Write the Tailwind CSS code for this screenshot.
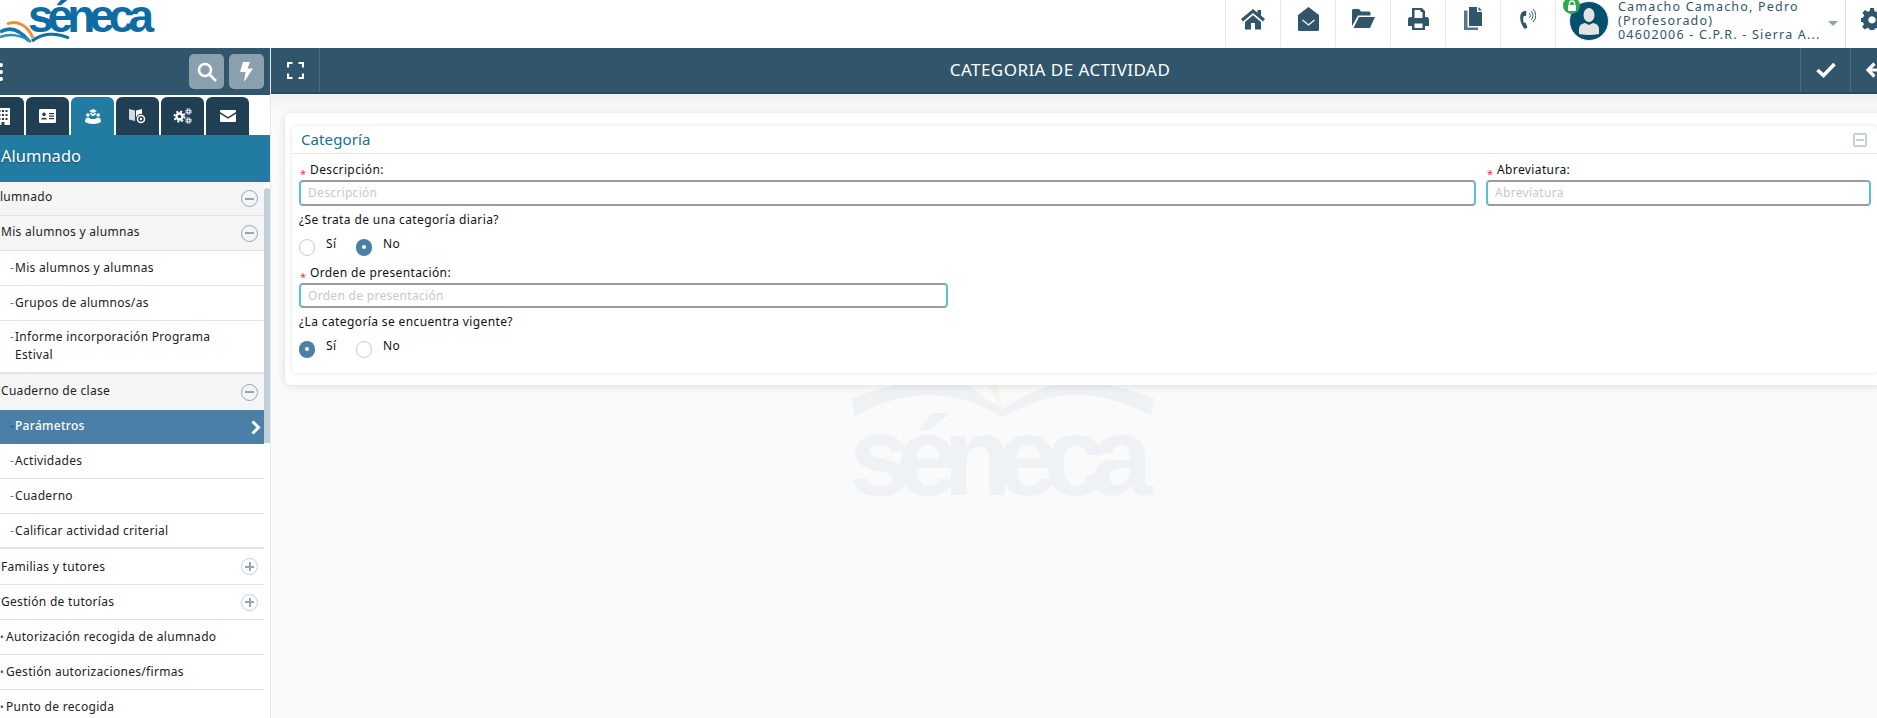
<!DOCTYPE html>
<html lang="es">
<head>
  <meta charset="UTF-8" />
  <title>Categoria de actividad</title>
  <script src="https://cdn.jsdelivr.net/npm/@tailwindcss/browser@4"></script>
</head>
<body class="w-[1877px] h-[718px] overflow-hidden flex flex-col bg-white font-['Noto_Sans',sans-serif] text-[12px] text-[#222]">

  <!-- barra superior -->
  <header class="h-[48px] shrink-0 flex items-start bg-white overflow-hidden">
    <div class="relative w-[200px] h-[47px] overflow-hidden">
      <svg class="absolute left-0 top-[18px] w-[72px] h-[26px]" viewBox="0 0 72 26" fill="none">
        <path d="M0 14 C10 8 20 12 29 23" stroke="#1c75a8" stroke-width="3.500"/>
        <path d="M0 19 C10 15 22 17 31 24" stroke="#2a8cc0" stroke-width="2.500"/>
        <path d="M7 6 C16 2 27 6 33 20" stroke="#ee8f2e" stroke-width="3"/>
        <path d="M32 23 C42 15 56 14 69 20" stroke="#0f6ea3" stroke-width="3"/>
      </svg>
      <span class="absolute left-[28px] top-[-14px] font-['Liberation_Sans',sans-serif] font-bold text-[46px] leading-[60px] tracking-[-6px] text-[#0d6ca3]">séneca</span>
    </div>
    <div class="flex-1"></div>
    <div class="flex h-[47px] text-[#31566b]">
      <div class="w-[55px] flex items-center justify-center border-l border-[#e8e8e8] pb-[10px]">
        <svg class="w-[24px] h-[22px]" viewBox="0 0 24 22" fill="currentColor"><path d="M12 1 L0 11 l2 2.4 L12 5 l10 8.4 L24 11 l-4-3.4V2h-3.5v2.7z"/><path d="M4 14 V21.500h6V15h4v6.500h6V14L12 7.200z"/></svg>
      </div>
      <div class="w-[55px] flex items-center justify-center border-l border-[#e8e8e8] pb-[10px]">
        <svg class="w-[21px] h-[24px]" viewBox="0 0 21 24" fill="currentColor"><path d="M10.500 0 L0 8 V22.500 a1.500 1.500 0 0 0 1.500 1.500 h18 a1.500 1.500 0 0 0 1.500-1.500 V8z"/><path d="M4.500 13 l6 5 6-5" fill="none" stroke="#fff" stroke-width="1.300"/></svg>
      </div>
      <div class="w-[55px] flex items-center justify-center border-l border-[#e8e8e8] pb-[10px]">
        <svg class="w-[23px] h-[19px]" viewBox="0 0 23 19" fill="currentColor"><path d="M0 17 V1.500 A1.500 1.500 0 0 1 1.500 0 H7 l2 2.500 h8 A1.500 1.500 0 0 1 18.500 4 V6.500 H6 z"/><path d="M1.500 19 L7 8 h16 l-5 11z"/></svg>
      </div>
      <div class="w-[55px] flex items-center justify-center border-l border-[#e8e8e8] pb-[10px]">
        <svg class="w-[21px] h-[22px]" viewBox="0 0 21 22" fill="currentColor" fill-rule="evenodd"><path d="M4 0 h10 l3 3 v6 h1.500 A2.500 2.500 0 0 1 21 11.500 V18 h-4 v4 H4 v-4 H0 v-6.500 A2.500 2.500 0 0 1 2.500 9 H4z M6.500 2 v8 h8 V4 h-2 V2z M6.500 15.500 v4.500 h8 v-4.500z"/></svg>
      </div>
      <div class="w-[55px] flex items-center justify-center border-l border-[#e8e8e8] pb-[10px]">
        <svg class="w-[18px] h-[23px]" viewBox="0 0 18 23" fill="currentColor"><path d="M5 0 h8 v5 h5 v14 H5z"/><path d="M14.500 0 L18 3.500 h-3.500z"/><path d="M3.500 3.500 V20.500 H14 V23 H0 V3.500z" fill="#55768a"/></svg>
      </div>
      <div class="w-[55px] flex items-center justify-center border-l border-[#e8e8e8] pb-[10px]">
        <svg class="w-[16px] h-[24px]" viewBox="0 0 16 24" fill="currentColor"><path d="M4 4 L1.500 5.500 C-1 10 0 16 4.500 22 L7.500 20.500 L5.500 15.500 L3.800 16 C3 13 3 11 3.800 9 L6 9 L6.500 4z"/><path d="M9 6 a3 3 0 0 1 0 5 M11 4 a6 6 0 0 1 0 9 M13 2 a9 9 0 0 1 0 13" fill="none" stroke="currentColor" stroke-width="1"/></svg>
      </div>
      <div class="relative w-[291px] flex border-l border-r border-[#e8e8e8] border-r-[#dddddd]">
        <div class="absolute left-[13px] top-[1px] w-[40px] h-[40px] rounded-full bg-[#05506f] border border-[#eeeeee] overflow-hidden">
          <svg class="w-[38px] h-[38px]" viewBox="0 0 38 38" fill="#e3e3e3"><ellipse cx="19" cy="13" rx="5.500" ry="7"/><path d="M9 32 V27 Q9 22 15 21 L19 23 L23 21 Q29 22 29 27 V32 Q19 34 9 32z"/></svg>
        </div>
        <div class="absolute left-[7px] top-[-3px] w-[17px] h-[17px] rounded-full bg-[#2fa84f] flex items-center justify-center">
          <svg class="w-[10px] h-[12px]" viewBox="0 0 10 12"><path d="M2.500 5 V3.500 a2.500 2.500 0 0 1 5 0 V5" fill="none" stroke="#fff" stroke-width="1.300"/><rect x="1" y="5" width="8" height="6" rx="1" fill="#fff"/></svg>
        </div>
        <div class="ml-[62px] pt-0 text-[12.500px] leading-[14px] tracking-[1.2px] text-[#31566b] whitespace-nowrap">
          <div>Camacho Camacho, Pedro</div>
          <div>(Profesorado)</div>
          <div>04602006 - C.P.R. - Sierra A...</div>
        </div>
        <div class="absolute left-[272px] top-[21px] w-0 h-0 border-x-[5px] border-x-transparent border-t-[5px] border-t-[#8ba3b3]"></div>
      </div>
      <div class="w-[31px] pl-[15px] pt-[8px] overflow-hidden">
        <svg class="w-[22px] h-[22px]" viewBox="0 0 24 24" fill="#31566b"><path fill-rule="evenodd" d="M10 0 h4 l.7 3.400 2.300 1 2.900-1.900 2.800 2.800 -1.900 2.900 1 2.300 L25 11 v4 l-3.400.7 -1 2.300 1.900 2.900 -2.800 2.800 -2.900-1.900 -2.300 1 L14 26 h-4 l-.7-3.400 -2.300-1 -2.900 1.900 -2.800-2.800 1.900-2.900 -1-2.300 L-1 15 v-4 l3.400-.7 1-2.300 L1.500 5.100 4.300 2.300 7.200 4.200 l2.300-1z M12 9 a4 4 0 1 0 .01 0z"/></svg>
      </div>
    </div>
  </header>

  <div class="flex-1 flex min-h-0">

    <!-- menu lateral -->
    <aside class="w-[270px] shrink-0 flex flex-col bg-white min-h-0">
      <div class="h-[47px] shrink-0 bg-[#31566b] flex items-center">
        <div class="w-[3px] flex flex-col gap-[3px] ml-[-1px]">
          <span class="w-[4px] h-[4px] rounded-full bg-white"></span>
          <span class="w-[4px] h-[4px] rounded-full bg-white"></span>
          <span class="w-[4px] h-[4px] rounded-full bg-white"></span>
        </div>
        <div class="ml-[187px] w-[35px] h-[35px] rounded-[5px] bg-[#8aa0ae] flex items-center justify-center">
          <svg class="w-[20px] h-[20px]" viewBox="0 0 20 20" fill="none" stroke="#fff" stroke-width="2.600"><circle cx="8" cy="8" r="6"/><path d="M12.500 12.500 L19 19"/></svg>
        </div>
        <div class="ml-[5px] w-[35px] h-[35px] rounded-[5px] bg-[#8aa0ae] flex items-center justify-center">
          <svg class="w-[13px] h-[20px]" viewBox="0 0 13 20" fill="#fff"><path d="M3 0 H10 L7.500 6.500 H13 L4 20 L5.500 10 H0z"/></svg>
        </div>
      </div>

      <nav class="h-[40px] shrink-0 pt-[2px] flex gap-[2px] ml-[-19px] items-end">
        <div class="w-[43px] h-[38px] rounded-t-[6px] bg-[#213f53] flex items-center justify-center">
          <svg class="w-[16px] h-[17px]" viewBox="0 0 16 17" fill="#fff" fill-rule="evenodd"><path d="M1 0 H15 V17 H9.500 V14 H6.500 V17 H1z M3.500 2 v2 h2 V2z M7 2 v2 h2 V2z M10.500 2 v2 h2 V2z M3.500 6 v2 h2 V6z M7 6 v2 h2 V6z M10.500 6 v2 h2 V6z M3.500 10 v2 h2 v-2z M7 10 v2 h2 v-2z M10.500 10 v2 h2 v-2z"/></svg>
        </div>
        <div class="w-[43px] h-[38px] rounded-t-[6px] bg-[#213f53] flex items-center justify-center">
          <svg class="w-[17px] h-[14px]" viewBox="0 0 17 14" fill="#fff" fill-rule="evenodd"><path d="M1 0 H16 a1 1 0 0 1 1 1 V13 a1 1 0 0 1-1 1 H1 a1 1 0 0 1-1-1 V1 a1 1 0 0 1 1-1z M5 3.500 a1.800 1.800 0 1 0 .01 0z M2 10.500 h6 c0-2.500-6-2.500-6 0z M10 4 v1.200 h5 V4z M10 6.500 v1.200 h5 V6.500z M10 9 v1.200 h5 V9z"/></svg>
        </div>
        <div class="w-[43px] h-[38px] rounded-t-[6px] bg-[#227ba1] flex items-center justify-center">
          <svg class="w-[16px] h-[15px]" viewBox="0 0 16 15" fill="#fff"><path d="M8 0 L12 2 L8 4 L4 2z"/><path d="M5 3.500 C5 8 11 8 11 3.500 L8 5z"/><circle cx="2.800" cy="6" r="1.800"/><circle cx="13.200" cy="6" r="1.800"/><path d="M0 13 C0 9 2 8.500 3.500 8.500 L6 10 H10 L12.500 8.500 C14 8.500 16 9 16 13 C12 15.500 4 15.500 0 13z"/></svg>
        </div>
        <div class="w-[43px] h-[38px] rounded-t-[6px] bg-[#213f53] flex items-center justify-center">
          <svg class="w-[17px] h-[16px]" viewBox="0 0 17 16" fill="#fff"><path d="M0 1 L6 2.500 V13 L0 11.500z" fill="#d5dde2"/><path d="M7 2.500 L13 1 V6 A5 5 0 0 0 7 10z"/><circle cx="12" cy="11" r="3.500" fill="none" stroke="#fff" stroke-width="1.500"/><circle cx="12" cy="11" r="1.200"/></svg>
        </div>
        <div class="w-[43px] h-[38px] rounded-t-[6px] bg-[#213f53] flex items-center justify-center">
          <svg class="w-[19px] h-[16px]" viewBox="0 0 19 16" fill="none" stroke="#fff"><circle cx="6.500" cy="8.500" r="5" stroke-width="2" stroke-dasharray="2 1.930"/><circle cx="6.500" cy="8.500" r="3" stroke-width="2.400"/><circle cx="15.500" cy="3.500" r="2.700" stroke-width="1.200" stroke-dasharray="1.200 .9"/><circle cx="15.500" cy="3.500" r="1.500" stroke-width="1.200"/><circle cx="15.500" cy="12.500" r="2.700" stroke-width="1.200" stroke-dasharray="1.200 .9"/><circle cx="15.500" cy="12.500" r="1.500" stroke-width="1.200"/></svg>
        </div>
        <div class="w-[43px] h-[38px] rounded-t-[6px] bg-[#213f53] flex items-center justify-center">
          <svg class="w-[16px] h-[12px]" viewBox="0 0 16 12" fill="#fff"><path d="M1 0 H15 a1 1 0 0 1 1 1 V2 L8 7 L0 2 V1 a1 1 0 0 1 1-1z"/><path d="M0 3.800 L8 8.800 L16 3.800 V11 a1 1 0 0 1-1 1 H1 a1 1 0 0 1-1-1z"/></svg>
        </div>
      </nav>

      <div class="h-[47px] shrink-0 bg-[#227ba1] flex items-center pl-[1px] pb-[5px] text-[16.500px] text-white [text-shadow:0_1px_2px_rgba(0,0,0,.35)]">Alumnado</div>

      <div class="flex flex-1 min-h-0 overflow-hidden">
        <ul class="w-[264px] shrink-0 tracking-[0.3px] leading-[18px]">
          <li class="h-[34px] flex items-center justify-between bg-[#f5f5f5] border-b border-[#e3e3e3] pr-[6px]">
            <span class="ml-[-8px] mb-[3px]">Alumnado</span>
            <span class="w-[17px] h-[17px] rounded-full border border-[#8ba9be] flex items-center justify-center"><span class="w-[9px] h-[2px] bg-[#8ba9be]"></span></span>
          </li>
          <li class="h-[35px] flex items-center justify-between bg-[#f5f5f5] border-b border-[#e3e3e3] pr-[6px]">
            <span class="ml-[1px] mb-[2px]">Mis alumnos y alumnas</span>
            <span class="w-[17px] h-[17px] rounded-full border border-[#8ba9be] flex items-center justify-center"><span class="w-[9px] h-[2px] bg-[#8ba9be]"></span></span>
          </li>
          <li class="h-[35px] flex items-center pb-[1px] border-b border-[#e3e3e3]"><span class="ml-[10px] w-[5px] text-[#777]">-</span>Mis alumnos y alumnas</li>
          <li class="h-[35px] flex items-center pb-[1px] border-b border-[#e3e3e3]"><span class="ml-[10px] w-[5px] text-[#777]">-</span>Grupos de alumnos/as</li>
          <li class="h-[53px] flex border-b-2 border-[#e3e3e3] pt-[7px]"><span class="ml-[10px] w-[5px] text-[#777]">-</span><span>Informe incorporación Programa<br />Estival</span></li>
          <li class="h-[36px] flex items-center justify-between bg-[#f5f5f5] pr-[6px]">
            <span class="ml-[1px] mb-[2px]">Cuaderno de clase</span>
            <span class="w-[17px] h-[17px] rounded-full border border-[#8ba9be] flex items-center justify-center"><span class="w-[9px] h-[2px] bg-[#8ba9be]"></span></span>
          </li>
          <li class="h-[34px] flex items-center justify-between bg-[#4a7fa7] text-white font-medium pr-[3px]">
            <span class="flex mb-[2px]"><span class="ml-[10px] w-[5px] text-[#24506e]">-</span>Parámetros</span>
            <svg class="w-[10px] h-[15px]" viewBox="0 0 10 15" fill="none" stroke="#fff" stroke-width="3"><path d="M1.500 1.500 L7.500 7.500 L1.500 13.500"/></svg>
          </li>
          <li class="h-[35px] flex items-center pb-[1px] border-b border-[#e3e3e3]"><span class="ml-[10px] w-[5px] text-[#777]">-</span>Actividades</li>
          <li class="h-[35px] flex items-center pb-[1px] border-b border-[#e3e3e3]"><span class="ml-[10px] w-[5px] text-[#777]">-</span>Cuaderno</li>
          <li class="h-[35px] flex items-center border-b-2 border-[#e3e3e3]"><span class="ml-[10px] w-[5px] text-[#777]">-</span>Calificar actividad criterial</li>
          <li class="h-[36px] flex items-center justify-between border-b border-[#e3e3e3] pr-[6px]">
            <span class="ml-[1px]">Familias y tutores</span>
            <span class="w-[17px] h-[17px] rounded-full border border-[#bcd0dd] flex items-center justify-center relative"><span class="w-[9px] h-[2px] bg-[#8ba9be]"></span><span class="absolute w-[2px] h-[9px] bg-[#8ba9be]"></span></span>
          </li>
          <li class="h-[35px] flex items-center justify-between border-b border-[#e3e3e3] pr-[6px]">
            <span class="ml-[1px]">Gestión de tutorías</span>
            <span class="w-[17px] h-[17px] rounded-full border border-[#bcd0dd] flex items-center justify-center relative"><span class="w-[9px] h-[2px] bg-[#8ba9be]"></span><span class="absolute w-[2px] h-[9px] bg-[#8ba9be]"></span></span>
          </li>
          <li class="h-[35px] flex items-center pb-[1px] border-b border-[#e3e3e3]"><span class="w-[6px] text-[#555] text-[10px]">•</span>Autorización recogida de alumnado</li>
          <li class="h-[35px] flex items-center pb-[1px] border-b border-[#e3e3e3]"><span class="w-[6px] text-[#555] text-[10px]">•</span>Gestión autorizaciones/firmas</li>
          <li class="h-[35px] flex items-center pb-[1px]"><span class="w-[6px] text-[#555] text-[10px]">•</span>Punto de recogida</li>
        </ul>
        <div class="w-[6px] shrink-0 pt-[6px]"><div class="h-[255px] rounded-t-[3px] bg-[#c2d0d9]"></div></div>
      </div>
    </aside>

    <!-- contenido -->
    <main class="flex-1 min-w-0 flex flex-col overflow-hidden border-l border-[#e8e8e8]">
      <div class="h-[46px] shrink-0 flex bg-[#31566b] border-b-2 border-[#2a4a5d] text-white">
        <div class="w-[49px] flex items-center justify-center border-r border-[#4b6e82]">
          <svg class="w-[17px] h-[17px]" viewBox="0 0 17 17" fill="none" stroke="#fff" stroke-width="2.200"><path d="M1 5.500 V1 H5.500 M11.500 1 H16 V5.500 M16 11.500 V16 H11.500 M5.500 16 H1 V11.500"/></svg>
        </div>
        <div class="flex-1 flex items-center justify-center text-[17px] tracking-[0.45px] uppercase">Categoria de actividad</div>
        <div class="w-[50px] flex items-center justify-center border-l border-[#4b6e82]">
          <svg class="w-[20px] h-[16px]" viewBox="0 0 20 16" fill="none" stroke="#fff" stroke-width="3.600"><path d="M1.500 8 L7.500 13.500 L18.500 2"/></svg>
        </div>
        <div class="w-[27px] flex items-center pl-[15px] border-l border-[#4b6e82] overflow-hidden">
          <svg class="w-[18px] h-[16px] shrink-0" viewBox="0 0 18 16" fill="none" stroke="#fff" stroke-width="3.200"><path d="M8.500 1.500 L2 8 L8.500 14.500 M2 8 H18"/></svg>
        </div>
      </div>

      <div class="relative flex-1 bg-[#fafafa] bg-gradient-to-b from-[#f1f1f1] to-[#fafafa] to-[18px]">
        <!-- marca de agua -->
        <div class="absolute left-[581px] top-[291px] w-[320px] h-[120px]">
          <svg class="absolute left-0 top-0 w-[302px] h-[34px]" viewBox="0 0 302 34" fill="#eef2f5"><path d="M0 13 L3 31 C30 16 55 10 78 10 C105 10 130 20 151 32 C172 20 197 10 224 10 C247 10 272 16 299 31 L302 13 C272 2 245 -3 224 -3 C200 -3 170 10 151 24 C130 10 100 -3 78 -3 C55 -3 30 2 0 13z"/><path d="M92 0 L146 26 L118 0z"/><path d="M135 0 L150 24 L146 0z" fill="#f8f3ee"/></svg>
          <span class="absolute left-[-3px] top-[12px] font-['Liberation_Sans',sans-serif] font-bold text-[112px] leading-[120px] tracking-[-15.200px] text-[#eef2f5]">séneca</span>
        </div>

        <div class="relative mt-[19px] ml-[14px] w-[1600px] pt-[13px] pl-[7px] pr-[8px] pb-[12px] bg-white rounded-[6px] shadow-[0_1px_8px_rgba(0,0,0,.12)]">
          <section class="bg-white rounded-[5px] shadow-[0_0_5px_rgba(0,0,0,.12)] pb-[11px]">
            <div class="h-[28px] flex items-center justify-between pl-[9px] pr-[10px] border-b border-[#e5e5e5]">
              <h2 class="text-[15px] tracking-[0.1px] text-[#20708f]">Categoría</h2>
              <span class="w-[14px] h-[14px] rounded-[2px] border-2 border-[#c4d2dc] flex items-center justify-center"><span class="w-[8px] h-[2px] bg-[#c4d2dc]"></span></span>
            </div>

            <div class="pl-[7px] pt-[9px] leading-[16px] tracking-[0.38px] text-[#111]">
              <div class="grid grid-cols-[1177px_385px] gap-x-[10px]">
                <div>
                  <label class="h-[17px] flex items-start"><span class="ml-[1px] w-[10px] mt-[3px] text-[#e33] text-[11px]">*</span><span class="mt-[-1px]">Descripción:</span></label>
                  <input class="w-full h-[26px] px-[7px] pb-[2px] rounded-[4px] bg-white border-y-2 border-y-[#9a9a9a] border-x-2 border-x-[#5bc0de] text-[12px] tracking-[0.3px] placeholder:text-[#c8c8c8]" placeholder="Descripción" />
                </div>
                <div>
                  <label class="h-[17px] flex items-start"><span class="ml-[1px] w-[10px] mt-[3px] text-[#e33] text-[11px]">*</span><span class="mt-[-1px]">Abreviatura:</span></label>
                  <input class="w-full h-[26px] px-[7px] pb-[2px] rounded-[4px] bg-white border-y-2 border-y-[#9a9a9a] border-x-2 border-x-[#5bc0de] text-[12px] tracking-[0.3px] placeholder:text-[#c8c8c8]" placeholder="Abreviatura" />
                </div>
              </div>

              <p class="mt-[6px] h-[16px]">¿Se trata de una categoría diaria?</p>
              <div class="mt-[6px] h-[26px] flex items-center">
                <div class="w-[57px] flex items-center"><span class="w-[16px] h-[17px] rounded-full border border-[#cccccc] bg-white"></span><span class="ml-[11px] mt-[-7px]">Sí</span></div>
                <div class="flex items-center"><span class="w-[16px] h-[17px] rounded-full bg-[#4a7fa7] flex items-center justify-center"><span class="w-[4px] h-[4px] rounded-full bg-white"></span></span><span class="ml-[11px] mt-[-7px]">No</span></div>
              </div>

              <label class="mt-[5px] h-[18px] flex items-start"><span class="ml-[1px] w-[10px] mt-[4px] text-[#e33] text-[11px]">*</span>Orden de presentación:</label>
              <input class="w-[649px] h-[25px] px-[7px] pb-[1px] block rounded-[4px] bg-white border-y-2 border-y-[#9a9a9a] border-x-2 border-x-[#5bc0de] text-[12px] tracking-[0.3px] placeholder:text-[#c8c8c8]" placeholder="Orden de presentación" />

              <p class="mt-[6px] h-[16px]">¿La categoría se encuentra vigente?</p>
              <div class="mt-[6px] h-[26px] flex items-center">
                <div class="w-[57px] flex items-center"><span class="w-[16px] h-[17px] rounded-full bg-[#4a7fa7] flex items-center justify-center"><span class="w-[4px] h-[4px] rounded-full bg-white"></span></span><span class="ml-[11px] mt-[-6px]">Sí</span></div>
                <div class="flex items-center"><span class="w-[16px] h-[17px] rounded-full border border-[#cccccc] bg-white"></span><span class="ml-[11px] mt-[-6px]">No</span></div>
              </div>
            </div>
          </section>
        </div>
      </div>
    </main>
  </div>
</body>
</html>
